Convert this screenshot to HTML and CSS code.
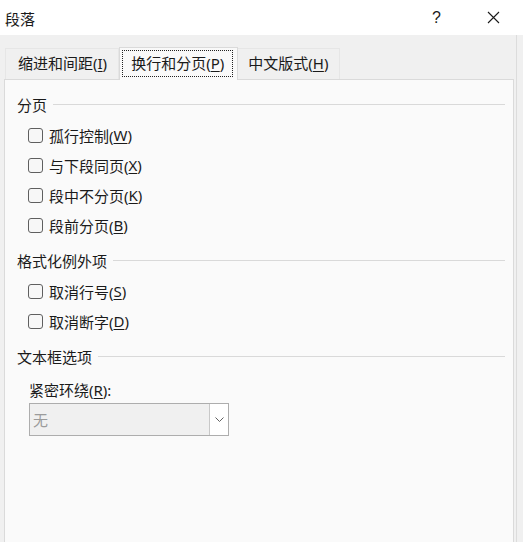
FILE: index.html
```html
<!DOCTYPE html>
<html lang="zh-CN">
<head>
    <meta charset="UTF-8">
    <title>段落</title>
    <link rel="stylesheet" href="styles.css">
</head>
<body>

    <div class="titlebar">
        <span class="title">段落</span>
        <span class="help">?</span>
        <span class="close">
            <svg width="13" height="13" viewBox="0 0 13 13"><path d="M1 1 L12 12 M12 1 L1 12" stroke="#1a1a1a" stroke-width="1.1" fill="none"/></svg>
        </span>
    </div>

    <div class="dialog">
        <div class="tabs">
            <div class="tab">缩进和间距(<u>I</u>)</div>
            <div class="tab active"><span class="focus">换行和分页(<u>P</u>)</span></div>
            <div class="tab">中文版式(<u>H</u>)</div>
        </div>

        <div class="panel">
            <div class="section">
                <div class="section-title"><span>分页</span></div>
                <label class="check"><span class="box"></span>孤行控制(<u>W</u>)</label>
                <label class="check"><span class="box"></span>与下段同页(<u>X</u>)</label>
                <label class="check"><span class="box"></span>段中不分页(<u>K</u>)</label>
                <label class="check"><span class="box"></span>段前分页(<u>B</u>)</label>
            </div>

            <div class="section">
                <div class="section-title"><span>格式化例外项</span></div>
                <label class="check"><span class="box"></span>取消行号(<u>S</u>)</label>
                <label class="check"><span class="box"></span>取消断字(<u>D</u>)</label>
            </div>

            <div class="section">
                <div class="section-title"><span>文本框选项</span></div>
                <div class="field-label">紧密环绕(<u>R</u>):</div>
                <div class="select">
                    <span class="value">无</span>
                    <span class="arrow">
                        <svg width="9" height="5" viewBox="0 0 9 5"><path d="M0.5 0.5 L4.5 4.5 L8.5 0.5" stroke="#606060" stroke-width="1" fill="none"/></svg>
                    </span>
                </div>
            </div>
        </div>
    </div>

</body>
</html>
```

FILE: styles.css
```css
* {
    box-sizing: border-box;
}

html, body {
    margin: 0;
    height: 100%;
}

body {
    font-family: "Noto Sans", "Noto Sans CJK SC", sans-serif;
    font-size: 15px;
    color: #1a1a1a;
    background-color: #f0f0f0;
    width: 523px;
    height: 542px;
    overflow: hidden;
    display: flex;
    flex-direction: column;
}

u {
    text-decoration: underline;
    text-underline-offset: 2px;
}

.titlebar {
    height: 35px;
    background: #fff;
    display: flex;
    align-items: center;
    padding-left: 5px;
    flex-shrink: 0;
}

.title {
    flex: 1;
    padding-top: 1px;
}

.help {
    font-family: "Liberation Sans", sans-serif;
    font-size: 16px;
    width: 14px;
    margin-right: 41px;
    padding-top: 1px;
}

.close {
    width: 13px;
    height: 13px;
    margin-right: 23px;
    display: flex;
}

.dialog {
    flex: 1;
    display: flex;
    flex-direction: column;
    padding: 12px 2px 0 4px;
    border-right: 1px solid #dcdcdc;
    margin-right: 6px;
}

.tabs {
    display: flex;
    height: 32px;
    align-items: flex-end;
    padding-left: 1px;
}

.tab {
    height: 31px;
    line-height: 29px;
    padding: 0 11px 0 12px;
    border: 1px solid #e6e6e6;
    border-bottom: none;
    background: #f0f0f0;
    white-space: nowrap;
}

.tab + .tab {
    border-left: none;
    padding: 0 11px 0 10px;
}

.tab.active {
    height: 33px;
    padding: 2px 4px 0 2px;
    background: #f9f9f9;
    border: 1px solid #dadada;
    border-bottom: none;
    margin-bottom: -1px;
    position: relative;
    z-index: 1;
}

.focus {
    display: block;
    height: 27px;
    line-height: 25px;
    padding: 0 8px 0 8px;
    border: 1px dotted #222;
}

.panel {
    flex: 1;
    background: #fafafa;
    border: 1px solid #dadada;
    border-bottom: none;
    padding: 14px 8px 0 11px;
}

.section + .section {
    margin-top: 10px;
}

.section-title {
    display: flex;
    align-items: center;
    height: 20px;
    margin-bottom: 6px;
    padding-left: 1px;
}

.section-title::after {
    content: "";
    flex: 1;
    height: 1px;
    background: #d9d9d9;
    margin-left: 6px;
    margin-top: 1px;
}

.check {
    display: flex;
    align-items: center;
    height: 30px;
    padding-left: 12px;
}

.box {
    width: 15px;
    height: 15px;
    border: 1px solid #5f5f5f;
    border-radius: 3px;
    background: #f7f7f7;
    margin-right: 6px;
}

.field-label {
    height: 20px;
    line-height: 20px;
    margin-top: 14px;
    padding-left: 13px;
}

.select {
    margin: 3px 0 0 13px;
    width: 200px;
    height: 33px;
    border: 1px solid #adadad;
    background: #f0f0f0;
    display: flex;
    align-items: center;
}

.select .value {
    flex: 1;
    color: #9b9b9b;
    padding-left: 3px;
}

.select .arrow {
    width: 19px;
    height: 100%;
    background: #fff;
    border-left: 1px solid #c8c8c8;
    display: flex;
    align-items: center;
    justify-content: center;
}
```
